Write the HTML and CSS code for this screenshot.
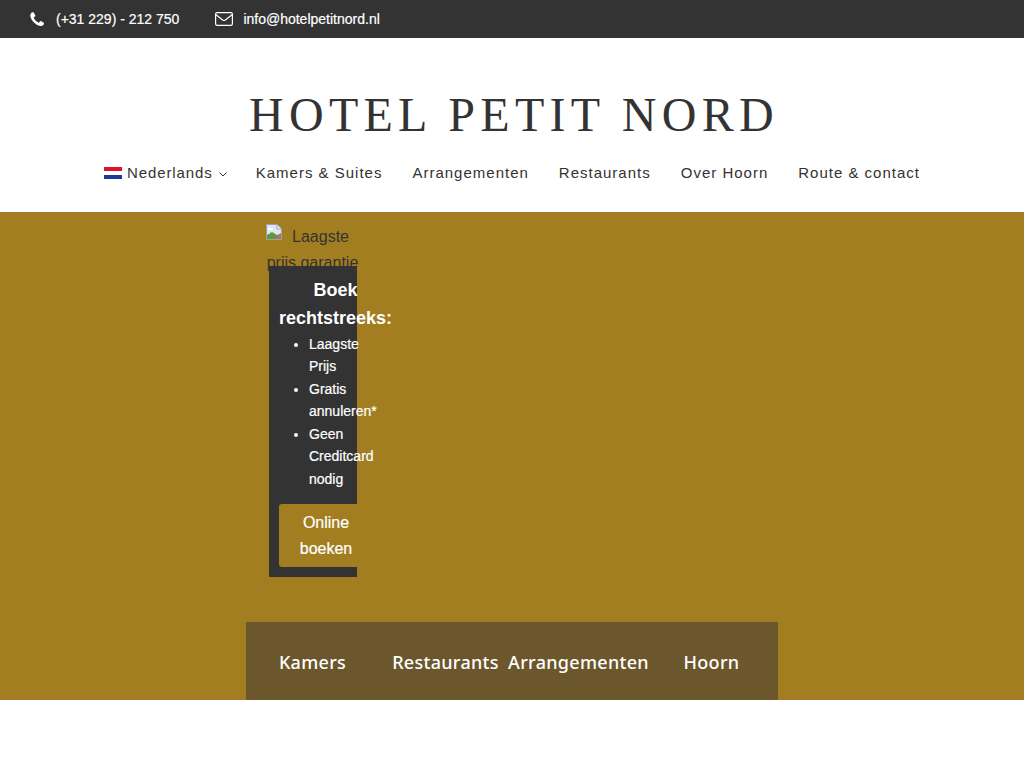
FILE: index.html
```html
<!DOCTYPE html>
<html lang="nl">
<head>
<meta charset="utf-8">
<title>Hotel Petit Nord</title>
<link rel="stylesheet" href="styles.css">
</head>
<body>
<div class="topbar">
  <a class="contact contact-phone">
    <svg class="icon-phone" viewBox="0 0 1408 1408" width="14" height="14"><path fill="#fff" d="M1408 1112c0 18-3 41-10 70s-14 52-21 68c-14 33-54 68-120 104-62 34-122 50-182 50-18 0-35-1-52-3s-36-7-57-13-37-11-47-14-29-11-55-21-43-15-49-17c-64-23-122-50-172-82-83-52-170-122-259-211S229 869 177 786c-32-50-59-108-82-172-2-6-8-23-17-49s-17-44-21-55-8-27-14-47-10-39-13-57-3-35-3-52c0-60 16-120 50-182 36-66 71-106 104-120 16-7 39-14 68-21s52-10 70-10c9 0 17 1 22 3 13 4 31 31 56 80 8 13 18 32 32 56s26 46 38 66 23 39 33 56c2 2 8 11 18 25s17 26 22 36 7 19 7 28c0 13-9 29-27 48s-38 37-60 53-41 33-60 51-27 33-27 45c0 6 2 13 5 22s6 16 8 20 7 13 13 23 10 16 11 17c48 87 103 161 165 223s136 117 223 165c1 1 7 5 17 11s18 11 23 13 11 5 20 8 16 5 22 5c12 0 27-9 45-27s35-38 51-60 34-42 53-60 35-27 48-27c9 0 18 2 28 7s22 12 36 22 23 16 25 18c17 10 36 21 56 33s42 25 66 38 43 24 56 32c49 25 76 43 80 56 2 5 3 13 3 22z"/></svg>
    <span>(+31 229) - 212 750</span>
  </a>
  <a class="contact contact-mail">
    <svg class="icon-mail" viewBox="0 0 18 14" width="18" height="14"><rect x="0.6" y="0.6" width="16.8" height="12.8" rx="1.6" fill="none" stroke="#fff" stroke-width="1.2"/><path d="M1 2.8 L7.6 8 Q9 9 10.4 8 L17 2.8" fill="none" stroke="#fff" stroke-width="1.2"/></svg>
    <span>info@hotelpetitnord.nl</span>
  </a>
</div>

<header class="masthead">
  <div class="logo">HOTEL PETIT NORD</div>
  <nav class="mainnav">
    <a class="navitem lang">
      <svg class="flag" viewBox="0 0 18 12" width="18" height="12"><rect width="18" height="4" fill="#e0102e"/><rect y="4" width="18" height="4" fill="#fff"/><rect y="8" width="18" height="4" fill="#1a3a94"/></svg>
      <span class="lang-name">Nederlands</span>
      <svg class="chev" viewBox="0 0 8 5" width="8" height="5"><path d="M0.5 0.5 L4 4 L7.5 0.5" fill="none" stroke="#333" stroke-width="1"/></svg>
    </a>
    <a class="navitem">Kamers &amp; Suites</a>
    <a class="navitem">Arrangementen</a>
    <a class="navitem">Restaurants</a>
    <a class="navitem">Over Hoorn</a>
    <a class="navitem">Route &amp; contact</a>
  </nav>
</header>

<main class="hero">
  <div class="columns">
    <div class="promo">
      <div class="broken">
        <svg class="broken-icon" viewBox="0 0 16 16" width="16" height="16"><path d="M0.5 0.5 H11 L15.5 5 V15.5 H0.5 Z" fill="#dfe6f2" stroke="#9aa3ad"/><path d="M11 0.5 V5 H15.5 Z" fill="#fff" stroke="#9aa3ad"/><path d="M2 4 h5 v2 h-5 z" fill="#fff"/><path d="M1 15 V11 L6 8 L11 11 L15 10 V15 Z" fill="#5d9a3c"/><path d="M6 15 L15 9 V15 Z" fill="#a9765a"/></svg>
        <span>Laagste</span><br>prijs garantie
      </div>
      <div class="card">
        <div class="card-inner">
          <h3 class="card-title">Boek rechtstreeks:</h3>
          <ul class="card-list">
            <li>Laagste Prijs</li>
            <li>Gratis annuleren*</li>
            <li>Geen Creditcard nodig</li>
          </ul>
          <a class="book">Online boeken</a>
        </div>
      </div>
    </div>
  </div>
  <div class="tabs">
    <a class="tab">Kamers</a>
    <a class="tab">Restaurants</a>
    <a class="tab">Arrangementen</a>
    <a class="tab">Hoorn</a>
  </div>
</main>
</body>
</html>
```
FILE: styles.css
```css
* { box-sizing: border-box; }
html, body { margin: 0; padding: 0; }
body { background: #fff; color: #333; font-family: "Liberation Sans", Arial, sans-serif; font-size: 14px; }

.topbar { height: 38px; background: #333; color: #fff; display: flex; align-items: center; padding-left: 30px; gap: 36px; }
.contact { display: flex; align-items: center; font-size: 14px; color: #fff; -webkit-text-stroke: 0.2px #fff; }
.contact-phone { gap: 12px; }
.contact-mail { gap: 10px; }
.icon-phone, .icon-mail { display: block; }

.masthead { height: 174px; display: flex; flex-direction: column; align-items: center; padding-top: 50px; }
.logo { font-family: "Liberation Serif", "Times New Roman", serif; font-size: 48px; line-height: 54px; letter-spacing: 5.3px; margin-right: -4px; color: #333; white-space: nowrap; }
.mainnav { display: flex; gap: 30px; margin-top: 20px; }
.navitem { display: flex; align-items: center; font-size: 15px; line-height: 22px; letter-spacing: 1px; color: #333; white-space: nowrap; }
.lang .flag { margin-right: 5px; }
.lang .lang-name { letter-spacing: 0.9px; }
.lang .chev { margin-left: 6px; margin-right: -1px; margin-top: 3px; }

.hero { height: 488px; background: #a37e21; display: flex; flex-direction: column; align-items: center; }
.columns { width: 532px; height: 410px; display: flex; }
.promo { width: 133px; padding: 12px 20px 0; }
.broken { height: 42px; font-size: 16px; line-height: 26px; width: 93px; color: #333; text-align: center; white-space: nowrap; position: relative; }
.broken-icon { float: left; }
.card { width: 88px; height: 311px; margin-left: 3px; background: #333; padding: 10px; color: #fff; position: relative; }
.card-inner { width: 113px; }
.card-title { margin: 0; font-size: 18px; line-height: 28px; font-weight: bold; text-align: center; }
.card-list { margin: 0.8px 0 14px; padding-left: 30px; width: 98px; font-size: 14px; line-height: 22.5px; -webkit-text-stroke: 0.2px #fff; }
.book { display: block; width: 94px; height: 63px; background: #a37e21; border-radius: 3px; text-align: center; font-size: 16px; line-height: 26px; padding: 6px 10px 0; color: #fff; -webkit-text-stroke: 0.2px #fff; }

.tabs { width: 532px; height: 78px; background: #6b572b; display: flex; align-items: center; }
.tab { width: 133px; text-align: center; font-family: "Noto Sans", sans-serif; font-weight: 500; font-size: 18px; letter-spacing: 0.3px; padding-top: 2px; color: #fff; white-space: nowrap; display: flex; justify-content: center; }
```
